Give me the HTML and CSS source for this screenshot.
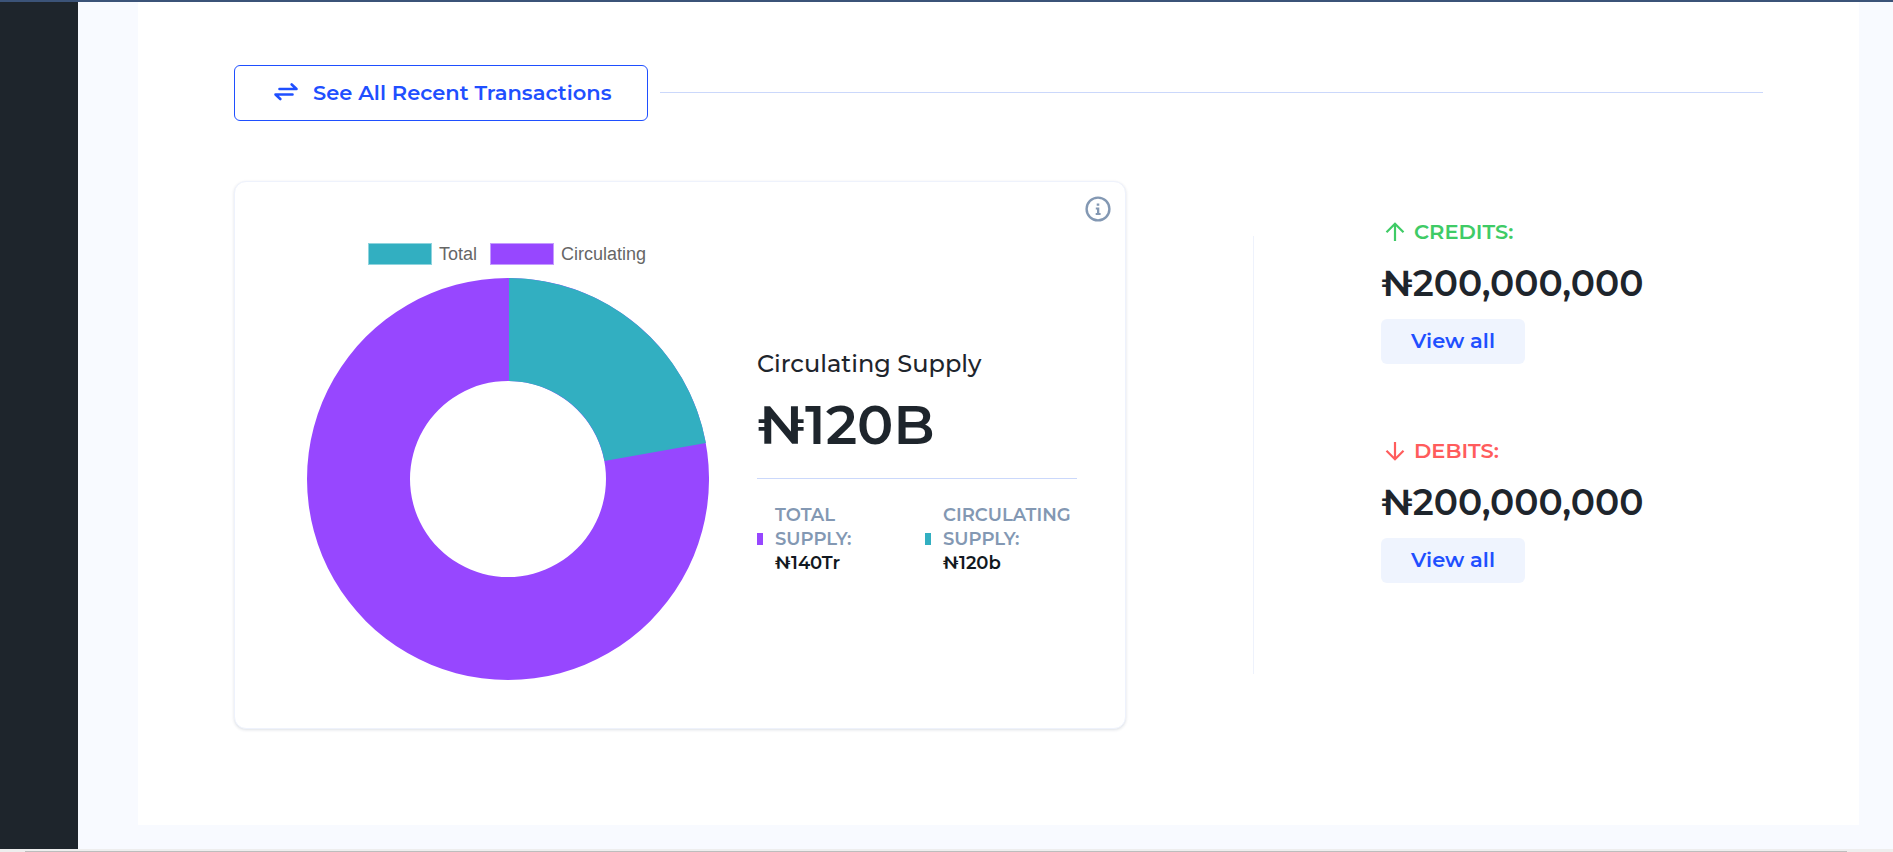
FILE: index.html
```html
<!DOCTYPE html>
<html lang="en">
<head>
<meta charset="utf-8">
<meta name="viewport" content="width=device-width, initial-scale=1">
<title>Supply overview</title>
<link rel="stylesheet" href="styles.css">
</head>
<body>
<div class="topbar"></div>
<div class="shell">
  <aside class="sidebar"></aside>
  <main class="main">
    <section class="panel">
      <div class="panel-head">
        <button class="btn-outline" type="button">
          <svg class="icon-swap" viewBox="0 0 26 18" aria-hidden="true"><path d="M6.500 6H23.500L18.700 1.500M19.500 11.500H2.500L7.300 16"/></svg>
          See All Recent Transactions
        </button>
        <hr class="rule">
      </div>
      <div class="overview">
        <article class="card">
          <button class="info" type="button" aria-label="Information">
            <svg viewBox="0 0 26 26" aria-hidden="true">
              <circle cx="13" cy="13" r="11.400" fill="none" stroke="currentColor" stroke-width="2.400"/>
              <path fill="currentColor" d="M11.700 7.600h2.600v2.200h-2.600zM10.800 11.500h3.500v5.500h1.300v1.900h-4.900v-1.900h1.300v-3.600h-1.200z"/>
            </svg>
          </button>
          <figure class="chart">
            <figcaption class="legend">
              <span class="legend-item"><span class="swatch swatch-teal"></span>Total</span>
              <span class="legend-item"><span class="swatch swatch-purple"></span>Circulating</span>
            </figcaption>
            <svg class="donut" viewBox="0 0 402 402" role="img" aria-label="Total and circulating supply">
              <path fill="#9747ff" fill-rule="evenodd" d="M201 0a201 201 0 1 0 .01 0zM201 103a98 98 0 1 1-.01 0z"/>
              <path fill="#32afc1" d="M202 0A201 201 0 0 1 398.900 165L297.500 183A98 98 0 0 0 202 103z"/>
            </svg>
          </figure>
          <div class="supply">
            <h2 class="supply-title">Circulating Supply</h2>
            <p class="supply-value">₦120B</p>
            <hr class="rule-light">
            <div class="breakdown">
              <div class="entry"><span class="mark mark-purple"></span><p class="entry-text">TOTAL SUPPLY: <span class="entry-value">₦140Tr</span></p></div>
              <div class="entry"><span class="mark mark-teal"></span><p class="entry-text">CIRCULATING SUPPLY: <span class="entry-value">₦120b</span></p></div>
            </div>
          </div>
        </article>
        <div class="divider"></div>
        <div class="stats">
          <section class="stat">
            <h3 class="stat-title credit"><svg class="arrow" viewBox="0 0 20 20" aria-hidden="true"><path d="M10 19V2M1.500 10.200L10 1.700l8.500 8.500"/></svg>CREDITS:</h3>
            <p class="amount">₦200,000,000</p>
            <button class="btn-soft" type="button">View all</button>
          </section>
          <section class="stat">
            <h3 class="stat-title debit"><svg class="arrow" viewBox="0 0 20 20" aria-hidden="true"><path d="M10 1v17M1.500 9.800L10 18.300l8.500-8.500"/></svg>DEBITS:</h3>
            <p class="amount">₦200,000,000</p>
            <button class="btn-soft" type="button">View all</button>
          </section>
        </div>
      </div>
    </section>
  </main>
</div>
<div class="scroll-track"><div class="scroll-thumb"></div></div>
</body>
</html>
```
FILE: styles.css
```css
* { box-sizing: border-box; }

body {
  margin: 0;
  min-height: 100vh;
  display: flex;
  flex-direction: column;
  background: #f8faff;
  color: #1e252c;
  font-family: Montserrat, Inter, sans-serif;
  font-weight: 600;
}

h2, h3, p, hr, figure { margin: 0; }
button { font: inherit; cursor: pointer; }

.topbar { height: 2px; background: #3b5378; }
.shell { flex: 1; display: flex; }
.sidebar { width: 78px; background: #1e252c; }
.main { flex: 1; padding: 0 34px 24px 60px; }
.panel { height: 100%; padding: 63px 96px 96px; background: #fff; }

.panel-head { display: flex; align-items: center; gap: 12px; margin-bottom: 60px; }
.btn-outline {
  display: flex;
  align-items: center;
  gap: 14px;
  height: 56px;
  padding: 0 36px 2px 38px;
  border: 1px solid #1f4fff;
  border-radius: 6px;
  background: #fff;
  color: #1f4fff;
  font-size: 21px;
}
.icon-swap {
  width: 26px;
  height: 18px;
  fill: none;
  stroke: currentColor;
  stroke-width: 2.6;
  stroke-linecap: round;
  stroke-linejoin: round;
}
.rule { flex: 1; border: 0; height: 1px; margin-bottom: 1px; background: #cbd8fb; }

.overview { display: grid; grid-template-columns: 892fr 1px 382fr; column-gap: 127px; }
.card {
  position: relative;
  display: flex;
  align-items: center;
  gap: 48px;
  padding: 61px 48px 48px 72px;
  border: 1px solid #eef2fc;
  border-radius: 12px;
  background: #fff;
  box-shadow: 0 1px 3px rgba(30, 50, 80, 0.15);
}
.info {
  position: absolute;
  top: 14px;
  right: 14px;
  width: 26px;
  height: 26px;
  padding: 0;
  border: 0;
  background: none;
  color: #8398b3;
}
.info svg { display: block; }

.chart { flex: 402; }
.legend {
  display: flex;
  justify-content: center;
  gap: 13px;
  margin-bottom: 13px;
  padding-right: 2px;
  color: #666;
  font: 18px/22px "Liberation Sans", Arial, sans-serif;
}
.legend-item { display: flex; gap: 7px; }
.swatch { width: 64px; height: 22px; border: 1px solid; }
.swatch-teal { background: #32afc1; border-color: #8fd4de; }
.swatch-purple { background: #9747ff; border-color: #c59bff; }
.donut { display: block; width: 100%; }

.supply { flex: 320; }
.supply-title { font-size: 24px; line-height: 32px; font-weight: 500; }
.supply-value { margin: 12px 0 20px; font-size: 54px; line-height: 66px; font-weight: 600; }
.rule-light { border: 0; height: 1px; background: #cbd8fb; }
.breakdown { display: grid; grid-template-columns: 128px 1fr; column-gap: 40px; margin-top: 24px; }
.entry { display: flex; align-items: center; gap: 12px; }
.mark { flex: none; width: 6px; height: 12px; }
.mark-purple { background: #9747ff; }
.mark-teal { background: #32afc1; }
.entry-text { color: #8398b3; font-size: 18px; line-height: 24px; }
.entry-value { display: block; color: #111820; }

.divider { align-self: center; height: 80%; background: #eef2fc; }
.stats { display: flex; flex-direction: column; gap: 73px; padding-top: 37px; }
.stat { display: flex; flex-direction: column; align-items: flex-start; }
.stat-title { display: flex; align-items: center; gap: 9px; padding-left: 4px; font-size: 21px; line-height: 28px; font-weight: 600; }
.credit { color: #3fcb66; }
.debit { color: #ff5c5c; }
.arrow { width: 20px; height: 20px; fill: none; stroke: currentColor; stroke-width: 2.2; }
.amount { margin: 15px 0 13px; font-size: 36px; line-height: 45px; font-weight: 600; }
.btn-soft {
  height: 45px;
  padding: 0 30px 2px;
  border: 0;
  border-radius: 6px;
  background: #eff4fe;
  color: #1f4fff;
  font-size: 21px;
}

.scroll-track { height: 3px; padding: 2px 46px 0 25px; background: #eee; }
.scroll-thumb { height: 1px; background: #bdbdbd; }
```
